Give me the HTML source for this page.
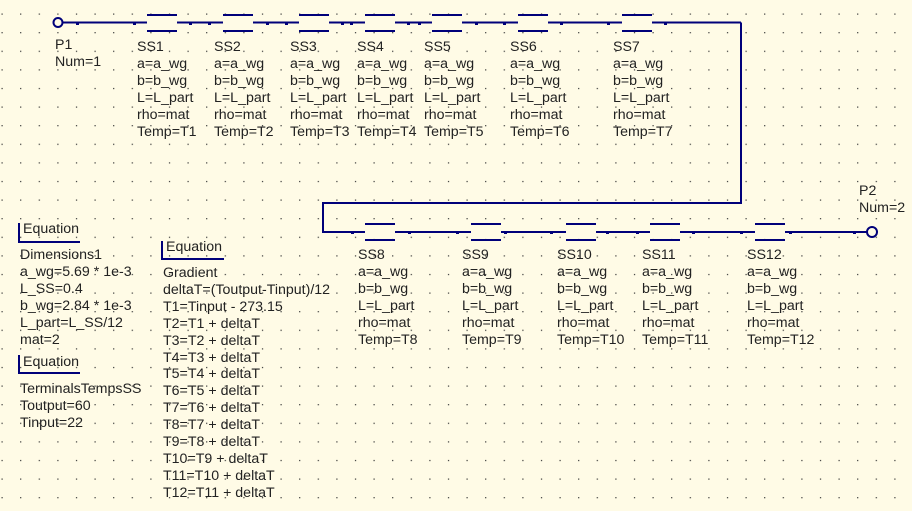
<!DOCTYPE html>
<html><head><meta charset="utf-8"><style>
html,body{margin:0;padding:0;}
body{width:912px;height:511px;overflow:hidden;position:relative;background:#fffbe6;font-family:"Liberation Sans",Arial,sans-serif;font-size:14.2px;color:#222;}
svg{position:absolute;left:0;top:0;}
.t{position:absolute;line-height:16.9px;white-space:pre;}
</style></head><body>
<svg width="912" height="511" xmlns="http://www.w3.org/2000/svg">
<defs>
<pattern id="g" x="1.5" y="13.5" width="18.6" height="18.6" patternUnits="userSpaceOnUse">
<rect x="0" y="0" width="1.2" height="1.2" fill="#333"/>
</pattern>
</defs>
<rect width="912" height="511" fill="url(#g)"/>
<g stroke="#00007a" stroke-width="2" fill="none">
<line x1="63" y1="22.5" x2="741" y2="22.5"/>
<polyline points="741,22.5 741,203 323,203 323,232 867,232"/>
<circle cx="58" cy="22.5" r="4.5" fill="#fffbe6"/>
<circle cx="872" cy="232" r="5" fill="#fffbe6"/>
</g>
<g fill="#fffbe6">
<rect x="147" y="17" width="30" height="12"/>
<rect x="223" y="17" width="30" height="12"/>
<rect x="299" y="17" width="30" height="12"/>
<rect x="365" y="17" width="30" height="12"/>
<rect x="432" y="17" width="30" height="12"/>
<rect x="518" y="17" width="30" height="12"/>
<rect x="622" y="17" width="30" height="12"/>
<rect x="365" y="226" width="30" height="12"/>
<rect x="471" y="226" width="30" height="12"/>
<rect x="566" y="226" width="30" height="12"/>
<rect x="650" y="226" width="30" height="12"/>
<rect x="755" y="226" width="30" height="12"/>
</g>
<g fill="#00007a">
<rect x="147" y="14" width="30" height="2"/><rect x="147" y="30" width="30" height="2"/>
<rect x="223" y="14" width="30" height="2"/><rect x="223" y="30" width="30" height="2"/>
<rect x="299" y="14" width="30" height="2"/><rect x="299" y="30" width="30" height="2"/>
<rect x="365" y="14" width="30" height="2"/><rect x="365" y="30" width="30" height="2"/>
<rect x="432" y="14" width="30" height="2"/><rect x="432" y="30" width="30" height="2"/>
<rect x="518" y="14" width="30" height="2"/><rect x="518" y="30" width="30" height="2"/>
<rect x="622" y="14" width="30" height="2"/><rect x="622" y="30" width="30" height="2"/>
<rect x="365" y="223" width="30" height="2"/><rect x="365" y="239" width="30" height="2"/>
<rect x="471" y="223" width="30" height="2"/><rect x="471" y="239" width="30" height="2"/>
<rect x="566" y="223" width="30" height="2"/><rect x="566" y="239" width="30" height="2"/>
<rect x="650" y="223" width="30" height="2"/><rect x="650" y="239" width="30" height="2"/>
<rect x="755" y="223" width="30" height="2"/><rect x="755" y="239" width="30" height="2"/>
<rect x="76" y="22" width="3" height="3"/><rect x="133" y="22" width="3" height="3"/>
<rect x="189" y="22" width="3" height="3"/><rect x="208" y="22" width="3" height="3"/>
<rect x="266" y="22" width="3" height="3"/><rect x="285" y="22" width="3" height="3"/>
<rect x="341" y="22" width="3" height="3"/><rect x="350" y="22" width="3" height="3"/>
<rect x="407" y="22" width="3" height="3"/><rect x="418" y="22" width="3" height="3"/>
<rect x="475" y="22" width="3" height="3"/><rect x="503" y="22" width="3" height="3"/>
<rect x="560" y="22" width="3" height="3"/><rect x="607" y="22" width="3" height="3"/>
<rect x="664" y="22" width="3" height="3"/>
<rect x="351" y="231" width="3" height="3"/><rect x="408" y="231" width="3" height="3"/>
<rect x="456" y="231" width="3" height="3"/><rect x="504" y="231" width="3" height="3"/>
<rect x="550" y="231" width="3" height="3"/><rect x="606" y="231" width="3" height="3"/>
<rect x="636" y="231" width="3" height="3"/><rect x="692" y="231" width="3" height="3"/>
<rect x="740" y="231" width="3" height="3"/><rect x="789" y="231" width="3" height="3"/>
<rect x="853" y="231" width="3" height="3"/>
<rect x="18" y="223" width="2" height="20"/><rect x="18" y="241" width="62" height="2"/>
<rect x="161" y="241" width="2" height="19"/><rect x="161" y="258" width="63" height="2"/>
<rect x="18" y="355" width="2" height="19"/><rect x="18" y="372" width="62" height="2"/>
</g>
</svg>

<div class="t" style="left:55px;top:37px">P1
Num=1</div>
<div class="t" style="left:137px;top:39px">SS1
a=a_wg
b=b_wg
L=L_part
rho=mat
Temp=T1</div>
<div class="t" style="left:214px;top:39px">SS2
a=a_wg
b=b_wg
L=L_part
rho=mat
Temp=T2</div>
<div class="t" style="left:290px;top:39px">SS3
a=a_wg
b=b_wg
L=L_part
rho=mat
Temp=T3</div>
<div class="t" style="left:357px;top:39px">SS4
a=a_wg
b=b_wg
L=L_part
rho=mat
Temp=T4</div>
<div class="t" style="left:424px;top:39px">SS5
a=a_wg
b=b_wg
L=L_part
rho=mat
Temp=T5</div>
<div class="t" style="left:510px;top:39px">SS6
a=a_wg
b=b_wg
L=L_part
rho=mat
Temp=T6</div>
<div class="t" style="left:613px;top:39px">SS7
a=a_wg
b=b_wg
L=L_part
rho=mat
Temp=T7</div>
<div class="t" style="left:859px;top:183px">P2
Num=2</div>
<div class="t" style="left:358px;top:247px">SS8
a=a_wg
b=b_wg
L=L_part
rho=mat
Temp=T8</div>
<div class="t" style="left:462px;top:247px">SS9
a=a_wg
b=b_wg
L=L_part
rho=mat
Temp=T9</div>
<div class="t" style="left:557px;top:247px">SS10
a=a_wg
b=b_wg
L=L_part
rho=mat
Temp=T10</div>
<div class="t" style="left:642px;top:247px">SS11
a=a_wg
b=b_wg
L=L_part
rho=mat
Temp=T11</div>
<div class="t" style="left:747px;top:247px">SS12
a=a_wg
b=b_wg
L=L_part
rho=mat
Temp=T12</div>
<div class="t" style="left:23px;top:221px">Equation</div>
<div class="t" style="left:20px;top:247px">Dimensions1
a_wg=5.69 * 1e-3
L_SS=0.4
b_wg=2.84 * 1e-3
L_part=L_SS/12
mat=2</div>
<div class="t" style="left:23px;top:354px">Equation</div>
<div class="t" style="left:20px;top:381px">TerminalsTempsSS
Toutput=60
Tinput=22</div>
<div class="t" style="left:166px;top:239px">Equation</div>
<div class="t" style="left:163px;top:265px">Gradient
deltaT=(Toutput-Tinput)/12
T1=Tinput - 273.15
T2=T1 + deltaT
T3=T2 + deltaT
T4=T3 + deltaT
T5=T4 + deltaT
T6=T5 + deltaT
T7=T6 + deltaT
T8=T7 + deltaT
T9=T8 + deltaT
T10=T9 + deltaT
T11=T10 + deltaT
T12=T11 + deltaT</div>
</body></html>
